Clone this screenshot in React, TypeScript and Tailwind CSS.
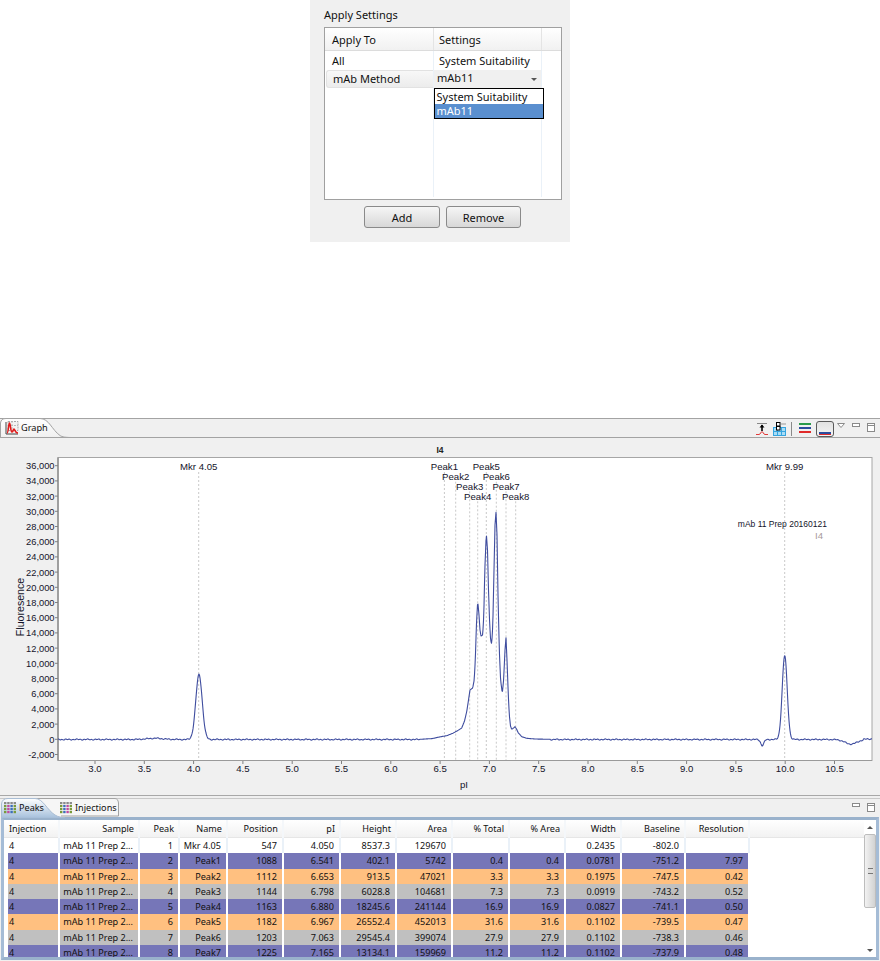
import React from "react";

const CLUSTER: [number, number][] = [
  [420, 739.3], [432, 738.6], [440, 736.9], [447, 735.6], [453, 733.2], [458, 730.4], [461.7, 728], [464.5, 721], [466.7, 711.7], [468.5, 700],
  [470, 690], [472.7, 688], [474.2, 680], [475.3, 660], [476.4, 625], [477.7, 601], [479, 615], [480, 630], [481, 636], [482.7, 635], [483.8, 615],
  [484.8, 570], [486.3, 533.3], [487.5, 550], [488.5, 590], [489.6, 622], [490.6, 640], [491.7, 644], [492.8, 625], [494, 570], [495, 525], [496, 512.3],
  [497, 535], [498, 595], [499.3, 650], [500.6, 680], [502.3, 693.3], [503.6, 680], [505, 650], [506, 637.7], [507, 660], [508.3, 695], [509.3, 715], [510.5, 726],
  [511.7, 729.3], [513.5, 728], [515, 726.7], [516.5, 729], [518.3, 733], [522, 736.8], [526.7, 738.3], [535, 739], [550, 739.3],
];

function traceY(x: number) {
  const n = Math.sin(x * 1.7) * 0.35 + Math.sin(x * 0.63) * 0.3;
  if (x >= 420 && x <= 550) {
    for (let i = 0; i < CLUSTER.length - 1; i++) {
      const [a, b] = CLUSTER[i];
      const [c, d] = CLUSTER[i + 1];
      if (x >= a && x <= c) return b + ((d - b) * (x - a)) / (c - a);
    }
  }
  const g = (c: number, s: number, h: number) => h * Math.exp(-((x - c) ** 2) / (2 * s * s));
  return (
    739.5 + n -
    g(199, 3.2, 65) - g(155, 8, 1.2) - g(784.7, 2.5, 84) +
    g(762.3, 1.6, 6) + g(851, 6, 4.6) + (x > 863 ? -0.6 : 0)
  );
}

function tracePath() {
  const pts: string[] = [];
  for (let x = 58; x <= 872; x += 0.5) pts.push(`${x},${traceY(x).toFixed(1)}`);
  return pts.join(" ");
}

const yTicks = ["36,000", "34,000", "32,000", "30,000", "28,000", "26,000", "24,000", "22,000", "20,000", "18,000", "16,000", "14,000", "12,000", "10,000", "8,000", "6,000", "4,000", "2,000", "0", "-2,000"];
const xTicks = ["3.0", "3.5", "4.0", "4.5", "5.0", "5.5", "6.0", "6.5", "7.0", "7.5", "8.0", "8.5", "9.0", "9.5", "10.0", "10.5"];
const markers: [string, number, number][] = [
  ["Mkr 4.05", 198.7, 467], ["Peak1", 444.4, 467], ["Peak2", 455.7, 476.7], ["Peak3", 469.7, 486.3], ["Peak4", 477.7, 496.3],
  ["Peak5", 486.3, 467], ["Peak6", 496.3, 476.7], ["Peak7", 506, 486.3], ["Peak8", 515.7, 496.3], ["Mkr 9.99", 784.7, 467],
];

function Chart() {
  return (
    <svg className="block w-[880px] h-[358px]" viewBox="0 438 880 358" fontFamily="'Liberation Sans', Arial, sans-serif" fontSize="9.6" fill="#14142a">
      <rect x="58" y="457.5" width="814" height="303" fill="#fff" stroke="#a6a6a6" />
      <path d="M58 457.5V760.5" stroke="#8c8c8c" strokeWidth="1.4" />
      <path d="M58 760.5H872" stroke="#9a9a9a" strokeWidth="1.2" />
      <text x="440" y="453" textAnchor="middle" fontWeight="700" fontSize="8.5" fill="#222">I4</text>
      {yTicks.map((t, i) => {
        const y = 465.7 + i * 15.2;
        return (
          <g key={t}>
            <path d={`M55 ${y}H58`} stroke="#808080" />
            <text x="54.5" y={y + 3.4} textAnchor="end" fontSize="9.3">{t}</text>
          </g>
        );
      })}
      {xTicks.map((t, i) => {
        const x = 95 + i * 49.3;
        return (
          <g key={t}>
            <path d={`M${x} 761V764`} stroke="#808080" />
            <text x={x} y="771.5" textAnchor="middle">{t}</text>
          </g>
        );
      })}
      {markers.map(([t, x, y]) => (
        <g key={t}>
          <path d={`M${x} ${y + 5}V760`} stroke="#c9c9c9" strokeDasharray="2 2" />
          <text x={x} y={y + 3.4} textAnchor="middle">{t}</text>
        </g>
      ))}
      <polyline points={tracePath()} fill="none" stroke="#3f4d9f" strokeWidth="1.1" strokeLinejoin="round" />
      <text x="827" y="526.500" textAnchor="end" fontSize="8.5">mAb 11 Prep 20160121</text>
      <text x="823" y="539" textAnchor="end" fill="#a89a9a">I4</text>
      <text transform="translate(24 607) rotate(-90)" textAnchor="middle" fontSize="10.6">Fluoresence</text>
      <text x="464" y="788" textAnchor="middle">pI</text>
    </svg>
  );
}

function MiniMax({ className = "" }: { className?: string }) {
  return (
    <svg width="24" height="10" viewBox="0 0 24 10" className={className}>
      <rect x="0.5" y="0.5" width="7" height="3" fill="#fff" stroke="#8a8a8a" />
      <rect x="15.5" y="0.5" width="7" height="8" fill="#fff" stroke="#8a8a8a" />
      <path d="M15.5 2.5h7" stroke="#8a8a8a" />
    </svg>
  );
}

function GraphToolbar() {
  return (
    <div className="flex items-center h-[19px] pr-[4px]">
      <svg width="14" height="14" viewBox="0 0 14 14" className="mr-[4px]">
        <path d="M2 1.500h10" stroke="#888" />
        <path d="M7 3v6" stroke="#000" strokeWidth="1.6" />
        <path d="M4.500 5.500 7 2.500l2.500 3z" fill="#000" />
        <path d="M1 12.500h3c1.500 0 2-3 3-3s1.500 3 3 3h3" fill="none" stroke="#e23b3b" />
      </svg>
      <svg width="14" height="14" viewBox="0 0 14 14" className="mr-[4px]">
        <rect x="0.5" y="5.500" width="12" height="8" fill="#a9dcf5" stroke="#35a5e0" />
        <path d="M4.500 6v8M8.500 6v8M1 9.500h11" stroke="#35a5e0" />
        <rect x="3.500" y="0.5" width="3.500" height="3.500" fill="#fff" stroke="#000" />
        <rect x="3.500" y="4.500" width="3.500" height="3.500" fill="#fff" stroke="#000" />
        <path d="M8 2h5" stroke="#999" />
      </svg>
      <div className="w-px h-[14px] bg-[#8a8a8a] mr-[7px]" />
      <svg width="13" height="11" viewBox="0 0 13 11" className="mr-[4px]">
        <rect y="0" width="12" height="2" fill="#2a9a4a" />
        <rect y="4" width="12" height="2" fill="#2b4c9c" />
        <rect y="8" width="12" height="2" fill="#e02a2a" />
      </svg>
      <div className="w-[18px] h-[16px] mr-[3px] rounded-[3px] border border-[#5a5a5a] bg-gradient-to-b from-[#e2e2e2] to-[#f4f4f4] flex flex-col items-center justify-end pb-[1px]">
        <div className="w-[12px] h-[2px] bg-[#2b4c9c]" />
        <div className="w-[12px] h-[1px] bg-[#e02a2a]" />
      </div>
      <svg width="8" height="5" viewBox="0 0 8 5" className="mr-[7px] -mt-[6px]">
        <path d="M0.500 0.500h7L4 4.500z" fill="#fff" stroke="#8a8a8a" />
      </svg>
      <MiniMax className="-mt-[2px]" />
    </div>
  );
}

function GraphTabIcon() {
  return (
    <svg width="15" height="14" viewBox="0 0 15 14" className="mr-[2px]">
      <rect x="4" y="0.500" width="10" height="9" fill="#f4f4f4" stroke="#a8a8a8" strokeDasharray="2 1" />
      <path d="M8 0v9M4 4.500h10" stroke="#bcbcbc" strokeDasharray="2 1" />
      <path d="M2 1v12h12" fill="none" stroke="#444" />
      <path d="M3 12C4.500 12 4.500 2 5.500 2S6.500 11 8 11s1-3 2-3 1 4 4 4" fill="none" stroke="#e21b1b" strokeWidth="1.6" />
    </svg>
  );
}

function TableIcon({ active }: { active?: boolean }) {
  const cols = ["#7a9a3a", "#c04aa0", "#3d6fb8", "#7a9a3a"];
  return (
    <svg width="13" height="12" viewBox="0 0 13 12" className="mr-[2px]">
      {[0, 1, 2, 3].map((i) =>
        [0, 1, 2, 3].map((j) => (
          <rect key={`${i}${j}`} x={i * 3.2} y={j * 3} width="2.400" height="2.200" fill={j === 0 ? "#8a8a8a" : active ? cols[i] : cols[3 - i]} />
        )),
      )}
    </svg>
  );
}

const COLS = ["Injection", "Sample", "Peak", "Name", "Position", "pI", "Height", "Area", "% Total", "% Area", "Width", "Baseline", "Resolution"];
const S = "mAb 11 Prep 2...";
const ROWS: string[][] = [
  ["4", S, "1", "Mkr 4.05", "547", "4.050", "8537.3", "129670", "", "", "0.2435", "-802.0", ""],
  ["4", S, "2", "Peak1", "1088", "6.541", "402.1", "5742", "0.4", "0.4", "0.0781", "-751.2", "7.97"],
  ["4", S, "3", "Peak2", "1112", "6.653", "913.5", "47021", "3.3", "3.3", "0.1975", "-747.5", "0.42"],
  ["4", S, "4", "Peak3", "1144", "6.798", "6028.8", "104681", "7.3", "7.3", "0.0919", "-743.2", "0.52"],
  ["4", S, "5", "Peak4", "1163", "6.880", "18245.6", "241144", "16.9", "16.9", "0.0827", "-741.1", "0.50"],
  ["4", S, "6", "Peak5", "1182", "6.967", "26552.4", "452013", "31.6", "31.6", "0.1102", "-739.5", "0.47"],
  ["4", S, "7", "Peak6", "1203", "7.063", "29545.4", "399074", "27.9", "27.9", "0.1102", "-738.3", "0.46"],
  ["4", S, "8", "Peak7", "1225", "7.165", "13134.1", "159969", "11.2", "11.2", "0.1102", "-737.9", "0.48"],
];
const ROW_BG = ["bg-white", "bg-[#7676b8]", "bg-[#ffc080]", "bg-[#c0c0c0]", "bg-[#7676b8]", "bg-[#ffc080]", "bg-[#c0c0c0]", "bg-[#7676b8]"];

function PeaksTable() {
  return (
    <div className="flex-1 min-w-0 h-full overflow-hidden text-[9.1px] text-[#111]">
      <div className="flex h-[18px] border-b border-[#e6e6e6] bg-gradient-to-b from-white to-[#f2f2f2]">
        <div className="grid grid-cols-[56px_80px_40px_48px_56px_57px_56px_56px_57px_56px_56px_64px_64px] w-[746px]">
          {COLS.map((c, i) => (
            <div key={c} className={`border-r-2 border-[#f4f7fa] leading-[18px] ${i === 0 ? "pl-[5px] text-left" : "pr-[4px] text-right"}`}>{c}</div>
          ))}
        </div>
      </div>
      {ROWS.map((r, ri) => (
        <div key={ri} className="grid grid-cols-[56px_80px_40px_48px_56px_57px_56px_56px_57px_56px_56px_64px_64px] w-[746px] h-[15.3px] leading-[15.3px]">
          {r.map((v, i) => (
            <div
              key={i}
              className={`${ROW_BG[ri]} border-r-2 ${ri === 0 ? "border-[#eaf1f8]" : "border-white"} whitespace-nowrap overflow-hidden ${i === 0 ? "ml-[4px] pl-[1px] text-left" : "pr-[5px] text-right"}`}
            >
              {v}
            </div>
          ))}
        </div>
      ))}
    </div>
  );
}

function ScrollBar() {
  return (
    <div className="w-[12px] h-full flex flex-col items-center bg-white">
      <div className="h-[14px] flex items-center">
        <div className="w-0 h-0 border-x-[3px] border-x-transparent border-b-[3px] border-b-[#555]" />
      </div>
      <div className="w-full h-[74px] rounded-[2px] border border-[#bdbdbd] bg-gradient-to-r from-[#f2f2f2] to-[#d2d2d2] flex items-center justify-center">
        <div className="w-[5px] h-[6px] border-y border-[#777] bg-[#ddd]" />
      </div>
      <div className="flex-1 flex items-end pb-[5px]">
        <div className="w-0 h-0 border-x-[3px] border-x-transparent border-t-[3px] border-t-[#555]" />
      </div>
    </div>
  );
}

function ApplySettings() {
  return (
    <div className="ml-[310px] w-[260px] h-[242px] bg-[#f0f0f0] pl-[14px] pt-[8px] font-['Noto_Sans','Open_Sans',sans-serif] text-[11px] text-[#111]">
      <div className="h-[19px] leading-[14px]">Apply Settings</div>
      <div className="relative w-[238px] h-[173px] border border-[#a0a0a0] bg-white">
        <div className="flex h-[23px] border-b border-[#dcdcdc] bg-gradient-to-b from-white to-[#f1f1f1] leading-[24px]">
          <div className="w-[109px] pl-[7px] border-r border-[#e4e4e4]">Apply To</div>
          <div className="w-[108px] pl-[5px] border-r border-[#e4e4e4]">Settings</div>
        </div>
        <div className="absolute left-[108px] top-[23px] bottom-[2px] w-px bg-[#eaf1f8]" />
        <div className="absolute left-[216px] top-[23px] bottom-[2px] w-px bg-[#eaf1f8]" />
        <div className="flex h-[19px] leading-[19px]">
          <div className="w-[109px] pl-[7px]">All</div>
          <div className="w-[108px] pl-[5px]">System Suitability</div>
        </div>
        <div className="flex h-[18px] leading-[16px]">
          <div className="w-[108px] ml-[1px] pl-[6px] rounded-l-[3px] border border-r-0 border-[#e2e2e2] bg-gradient-to-b from-[#f8f8f8] to-[#ececec]">mAb Method</div>
          <div className="w-[92px] pl-[3px] bg-[#f0f0f0] leading-[15px]">mAb11</div>
          <div className="w-[16px] bg-[#f0f0f0] flex items-center justify-center">
            <div className="w-0 h-0 border-x-[3px] border-x-transparent border-t-[3px] border-t-[#555]" />
          </div>
        </div>
        <div className="absolute left-[108.5px] top-[60px] w-[110px] h-[31px] border border-black bg-white leading-[14.5px]">
          <div className="pl-[2px] h-[15px] leading-[15px]">System Suitability</div>
          <div className="pl-[2px] h-[14px] bg-[#5a8fcf] text-white">mAb11</div>
        </div>
      </div>
      <div className="flex ml-[40px] mt-[6px] gap-[6px] text-center">
        <div className="w-[76px] h-[22px] leading-[22px] rounded-[3px] border border-[#8a8a8a] bg-gradient-to-b from-[#f6f6f6] to-[#d8d8d8]">Add</div>
        <div className="w-[75px] h-[22px] leading-[22px] rounded-[3px] border border-[#8a8a8a] bg-gradient-to-b from-[#f6f6f6] to-[#d8d8d8]">Remove</div>
      </div>
    </div>
  );
}

export default function App() {
  return (
    <div className="w-[880px] h-[961px] overflow-hidden bg-white">
      <ApplySettings />
      <div className="mt-[176px] w-[880px] font-['Noto_Sans','Open_Sans',sans-serif] text-[#111]">
        <div className="h-[378px] bg-[#f0f0f0] border-b border-[#a8a8a8] overflow-hidden">
          <div className="relative flex justify-end h-[20px] border-t border-b border-[#a3a3a3]">
            <div className="absolute left-0 top-[-1px] h-[20px] w-[72px]">
              <svg className="absolute inset-0" width="72" height="20" viewBox="0 0 72 20">
                <path d="M0.500 19V5Q1 0.500 6 0.500H40C49 0.500 52 12 60 17.500 62 19 66 19.500 72 19.500H0z" fill="url(#tabg)" stroke="#a3a3a3" />
                <defs>
                  <linearGradient id="tabg" x1="0" y1="0" x2="0" y2="1">
                    <stop offset="0" stopColor="#fff" />
                    <stop offset="1" stopColor="#f0f0f0" />
                  </linearGradient>
                </defs>
              </svg>
              <div className="absolute left-[4px] top-[3px] flex items-center text-[9.2px] leading-[14px]">
                <GraphTabIcon />
                <span>Graph</span>
              </div>
            </div>
            <GraphToolbar />
          </div>
          <Chart />
        </div>
        <div className="h-[165px] bg-[#f0f0f0] pt-[2px] flex flex-col">
          <div className="relative flex justify-end h-[19px] border-t border-[#c8c8c8] pt-[4px] pr-[4px]">
            <div className="absolute left-[1px] top-[-1px] h-[19px] w-[120px]">
              <svg className="absolute inset-0" width="120" height="20" viewBox="0 0 120 20">
                <path d="M1.500 19V6Q2 0.500 8 0.500H114Q117 0.500 117.500 5V18H60" fill="#f6f6f6" stroke="#a3a3a3" />
                <path d="M0.500 20V6Q1 0.500 7 0.500H34C42 0.500 46 12 54 17 57 19 61 19.500 64 20z" fill="url(#tabb)" stroke="#a9bdd4" />
                <defs>
                  <linearGradient id="tabb" x1="0" y1="0" x2="0" y2="1">
                    <stop offset="0" stopColor="#ffffff" />
                    <stop offset="1" stopColor="#a6c0dc" />
                  </linearGradient>
                </defs>
              </svg>
              <div className="absolute left-[3px] top-[2.500px] flex items-center text-[9.1px] leading-[14px]">
                <TableIcon active />
                <span>Peaks</span>
                <span className="ml-[16px]"><TableIcon /></span>
                <span>Injections</span>
              </div>
            </div>
            <MiniMax />
          </div>
          <div className="mx-[1px] h-[143px] border-x-[3px] border-t-[3.5px] border-b-[3px] border-x-[#a5bcd6] border-y-[#9ab2cc] bg-white flex overflow-hidden">
            <PeaksTable />
            <ScrollBar />
          </div>
        </div>
      </div>
    </div>
  );
}
